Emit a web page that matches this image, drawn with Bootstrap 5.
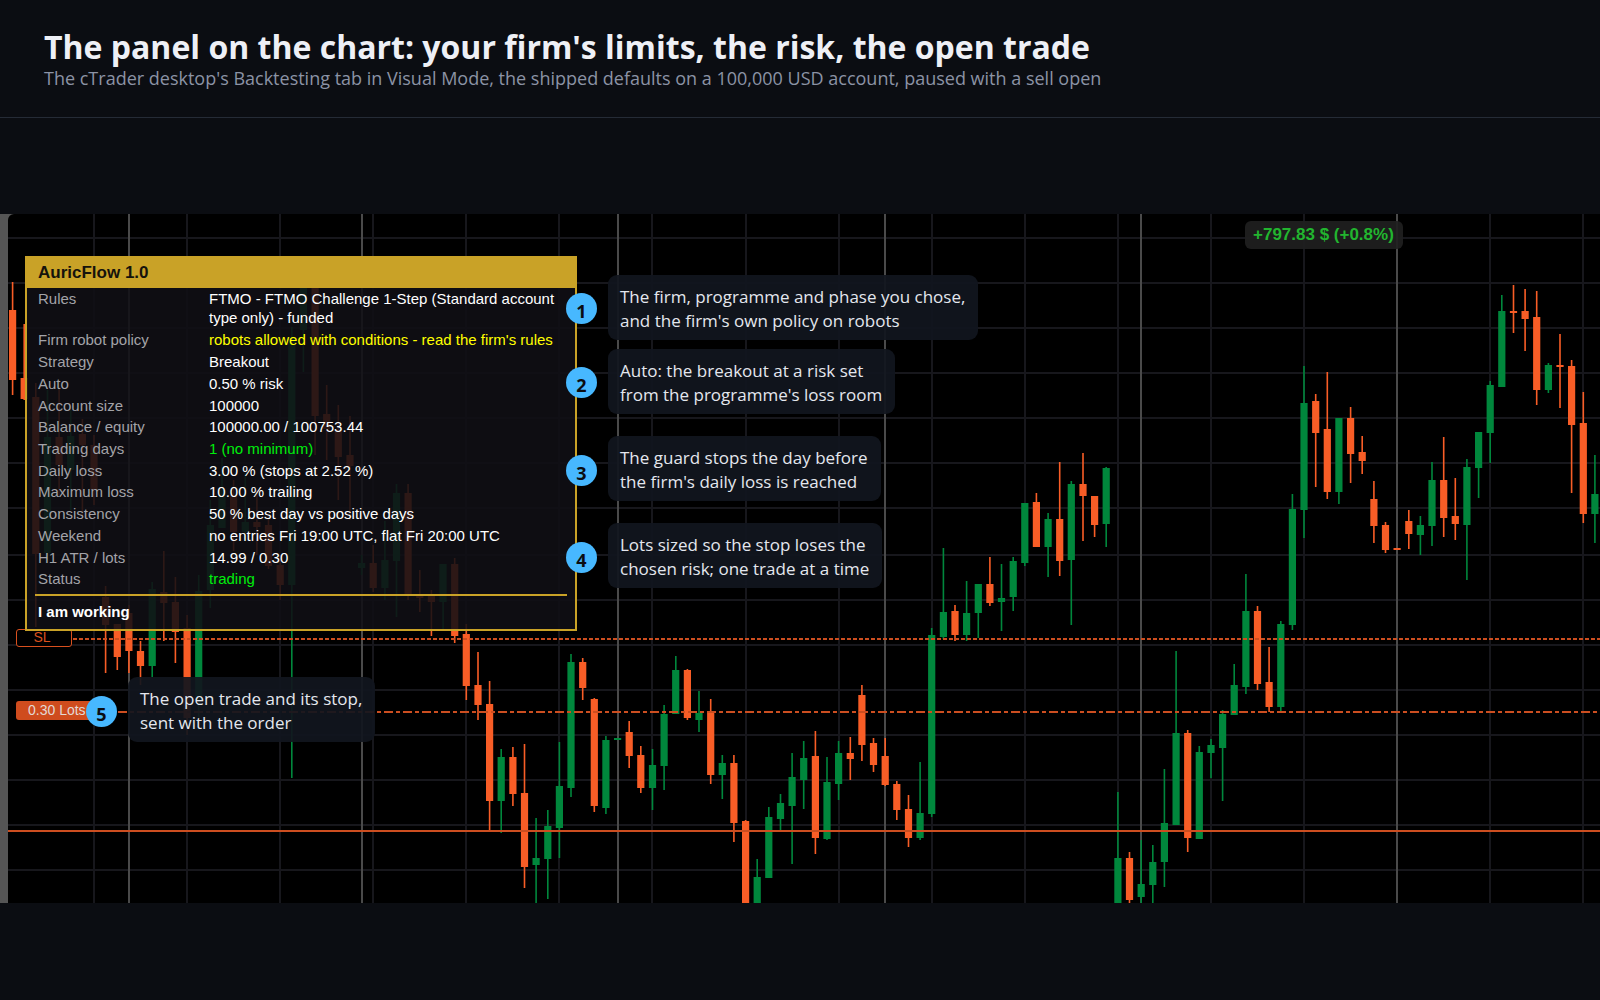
<!DOCTYPE html>
<html lang="en">
<head>
<meta charset="utf-8">
<meta name="viewport" content="width=device-width, initial-scale=1">
<title>AuricFlow - the panel on the chart</title>
<link href="https://cdn.jsdelivr.net/npm/bootstrap@5.3.0/dist/css/bootstrap.min.css" rel="stylesheet">
<style>
  body { background: #0b0d12; color: #eef0f6; font-family: "Open Sans", "Noto Sans", sans-serif; }
  .page-head { padding: 28px 44px 27px; border-bottom: 1px solid #252b36; }
  .page-head h1 { font-size: 32px; line-height: 38px; font-weight: 700; margin: 0; }
  .page-head p { font-size: 18px; line-height: 24px; color: #8b93a5; margin: 0; }
  .stage-area { padding-bottom: 1px; }
  .stage { background: #555; height: 689px; }
  .plot { display: block; width: 100%; height: 100%; }
  .up { fill: #00873c; }
  .down { fill: #f85d26; }
  .robot { position: absolute; left: 25px; top: 42px; width: 552px; height: 375px; border: 2px solid #c9a227;
           background: rgba(16, 15, 20, .88); font-family: "Liberation Sans", Arial, sans-serif; font-size: 15px; color: #fff; }
  .robot h2 { background: #c9a227; color: #15130c; font-size: 17px; line-height: 30px; font-weight: 700; padding: 0 11px; margin: 0; }
  .robot table { width: 100%; height: 302px; }
  .robot th, .robot td { padding: 1px 0; line-height: 19px; font-weight: 400; vertical-align: top; text-align: left; }
  .robot th { width: 182px; padding-left: 11px; color: #a3a3a8; }
  .robot hr { margin: 4px 8px 0; border: 0; border-top: 2px solid #c9a227; opacity: 1; }
  .robot p { margin: 0; padding: 6px 11px; line-height: 20px; font-weight: 700; }
  .warn { color: #ff0; }
  .good { color: #00ee0c; }
  .note { position: absolute; background: rgba(17, 22, 30, .93); border-radius: 9px; padding: 10px 13px 7px 12px;
          font-size: 17px; line-height: 24px; color: #e4e7ee; white-space: nowrap; }
  .pin { position: absolute; width: 31px; height: 31px; border-radius: 50%; background: #47b8ff; color: #0b0d12;
         font-size: 18px; line-height: 31px; padding-top: 3px; font-weight: 700; text-align: center; }
  .tag { position: absolute; left: 16px; border-radius: 3px; font-family: "Liberation Sans", Arial, sans-serif; font-size: 14px; }
  .tag-sl { top: 415px; width: 56px; height: 18px; line-height: 14px; padding-right: 4px; border: 1px solid #d9501e; background: #000; color: #d9501e; text-align: center; }
  .tag-lots { top: 487px; width: 90px; height: 19px; line-height: 19px; padding-left: 12px; background: #cf4c1e; color: #e3d9d5; }
  .profit { position: absolute; left: 1245px; top: 7px; padding: 0 9px 0 8px; border-radius: 6px; background: rgba(32, 32, 32, .92);
            color: #22b52f; font-family: "Liberation Sans", Arial, sans-serif; font-weight: 700; font-size: 17px; line-height: 28px; white-space: nowrap; }
</style>
</head>
<body class="min-vh-100 d-flex flex-column">
<header class="page-head">
  <h1>The panel on the chart: your firm's limits, the risk, the open trade</h1>
  <p>The cTrader desktop's Backtesting tab in Visual Mode, the shipped defaults on a 100,000 USD account, paused with a sell open</p>
</header>
<main class="stage-area flex-grow-1 d-flex flex-column justify-content-center">
  <section class="stage position-relative overflow-hidden" aria-label="Price chart">
    <svg class="plot" aria-hidden="true">
      <svg x="8" width="100%" height="100%"><rect width="100%" height="100%" rx="6"/><rect x="6" width="100%" height="100%"/><rect y="6" width="100%" height="100%"/></svg>
      <g id="plot" transform="translate(0 -214)"></g>
    </svg>

    <div class="tag tag-sl">SL</div>
    <div class="tag tag-lots">0.30 Lots</div>
    <div class="profit">+797.83 $ (+0.8%)</div>

    <div class="robot">
      <h2>AuricFlow 1.0</h2>
      <table>
        <tbody>
          <tr><th scope="row">Rules</th><td>FTMO - FTMO Challenge 1-Step (Standard account<br>type only) - funded</td></tr>
          <tr><th scope="row">Firm robot policy</th><td class="warn">robots allowed with conditions - read the firm's rules</td></tr>
          <tr><th scope="row">Strategy</th><td>Breakout</td></tr>
          <tr><th scope="row">Auto</th><td>0.50 % risk</td></tr>
          <tr><th scope="row">Account size</th><td>100000</td></tr>
          <tr><th scope="row">Balance / equity</th><td>100000.00 / 100753.44</td></tr>
          <tr><th scope="row">Trading days</th><td class="good">1 (no minimum)</td></tr>
          <tr><th scope="row">Daily loss</th><td>3.00 % (stops at 2.52 %)</td></tr>
          <tr><th scope="row">Maximum loss</th><td>10.00 % trailing</td></tr>
          <tr><th scope="row">Consistency</th><td>50 % best day vs positive days</td></tr>
          <tr><th scope="row">Weekend</th><td>no entries Fri 19:00 UTC, flat Fri 20:00 UTC</td></tr>
          <tr><th scope="row">H1 ATR / lots</th><td>14.99 / 0.30</td></tr>
          <tr><th scope="row">Status</th><td class="good">trading</td></tr>
        </tbody>
      </table>
      <hr>
      <p>I am working</p>
    </div>

    <div class="note" style="left:608px;top:61px">The firm, programme and phase you chose,<br>and the firm's own policy on robots</div>
    <div class="note" style="left:608px;top:135px">Auto: the breakout at a risk set<br>from the programme's loss room</div>
    <div class="note" style="left:608px;top:222px">The guard stops the day before<br>the firm's daily loss is reached</div>
    <div class="note" style="left:608px;top:309px">Lots sized so the stop loses the<br>chosen risk; one trade at a time</div>
    <div class="note" style="left:128px;top:463px">The open trade and its stop,<br>sent with the order</div>

    <div class="pin" style="left:566px;top:79px">1</div>
    <div class="pin" style="left:566px;top:153px">2</div>
    <div class="pin" style="left:566px;top:241px">3</div>
    <div class="pin" style="left:566px;top:328px">4</div>
    <div class="pin" style="left:86px;top:482px">5</div>
  </section>
</main>
<script src="https://cdn.jsdelivr.net/npm/bootstrap@5.3.0/dist/js/bootstrap.bundle.min.js"></script>
<script>
  // One entry per bar: direction, body top, body bottom, wick top, wick bottom.
  const bars = `d310,380,282,395 d378,399,324,400 d397,554,383,627 u437,553,390,560 d437,465,388,495 u436,470,410,510
d434,445,419,515 d445,490,435,505 d597,625,586,673 d624,657,624,670 d613,651,605,673 d651,666,641,685 u589,666,582,677
d592,603,551,641 d602,632,577,663 d628,718,615,735 u591,700,575,718 u525,590,500,608 u490,528,458,528 d495,532,480,551
u522,532,473,540 d522,527,490,555 d525,566,515,569 d565,585,555,600 u338,585,327,778 u270,330,270,372 d280,416,270,455
d414,429,385,460 d430,457,405,500 d455,466,416,520 u563,568,555,575 d563,588,545,592 u560,588,521,600 u493,561,484,617
d493,596,484,600 d596,598,570,612 d596,602,590,636 u564,602,564,630 d564,636,558,643 d634,686,624,700 d685,705,652,720
d704,801,681,831 u757,801,749,833 d757,794,747,806 d793,867,744,888 u858,865,818,903 u826,859,810,899 u786,828,742,858
u662,788,654,797 d662,688,658,700 d699,806,698,812 u740,808,736,814 u738,740,738,740 d732,756,721,768 d755,788,746,793
u765,788,749,810 u714,766,705,790 u670,714,656,714 d670,718,669,720 u713,720,691,732 d712,775,699,784 u763,775,755,799
d763,823,755,842 d821,903,820,903 u877,903,859,903 u817,878,807,878 u803,819,794,831 u777,806,753,864 u758,780,741,809
d756,838,731,854 u782,839,757,840 u753,784,741,800 d753,759,737,780 d695,745,685,761 d743,765,738,772 d756,785,738,786
d784,810,781,820 d809,838,795,847 u813,838,762,840 u635,814,628,817 u612,637,548,639 d611,635,605,641 u613,635,581,641
u584,613,584,638 d584,603,557,606 u598,602,564,631 u561,597,557,611 u503,563,503,566 d502,547,493,547 u519,547,513,577
d519,561,462,576 u484,560,481,625 d484,496,453,541 d496,525,496,537 u468,524,467,547 u858,903,792,903 d858,900,852,903
u884,897,840,903 u862,885,845,903 u823,862,769,887 u733,825,651,825 d733,838,730,852 u752,839,746,839 u745,753,739,778
u714,748,710,801 u685,715,664,715 u611,687,574,694 d611,684,606,690 d682,707,647,712 u624,707,621,712 u509,625,494,630
u403,510,366,538 d401,433,394,487 d429,492,372,499 u418,492,418,504 d418,454,407,483 d452,461,436,474 d499,526,481,543
d525,550,522,553 d548,550,548,550 d521,534,510,549 u525,535,516,555 u480,526,462,546 d480,518,437,537 d516,524,478,540
u467,525,459,580 u432,468,432,498 u385,433,381,463 u311,387,295,387 d311,313,285,333 d311,319,289,351 d317,390,291,405
u365,390,363,393 d365,367,334,408 d366,425,360,493 d423,514,392,523 u494,514,455,543`.split(/\s+/);
  const step = 11.635, first = 94 - 7 * step;
  const box = (x, y, w, h, attr) => `<rect x="${x}" y="${y}" width="${w}" height="${h}" ${attr}/>`;
  let out = '';
  for (let k = 0; k < 17; k++) out += box(Math.round(93 + k * step * 8), 214, 2, 689, 'fill="#17171c"');
  for (const y of [238, 283, 328, 373, 418, 463, 508, 555, 600, 645, 690, 735, 780, 825, 870]) out += box(8, y - 1, '100%', 2, 'fill="#17171c"');
  // Day separators
  for (const x of [128, 361, 617, 884, 1140, 1396]) out += box(x, 214, 2, 689, 'fill="#4a4a4a"');
  bars.forEach((bar, i) => {
    const x = first + i * step, [top, bottom, high, low] = bar.slice(1).split(',').map(Number);
    const cls = `class="${bar[0] === 'u' ? 'up' : 'down'}"`;
    out += box((x - .8).toFixed(1), high, 1.6, low - high, cls) + box((x - 3.6).toFixed(1), top, 7.2, bottom - top, cls);
  });
  const rule = (y, x, w, dash) => `<line x1="${x}" y1="${y}" x2="100%" y2="${y}" stroke="#cc4e20" stroke-width="${w}" stroke-dasharray="${dash}"/>`;
  out += rule(639, 73, 2, '4 2') + rule(712, 118, 2, '9 3 4 3') + rule(831, 8, 2, 'none');
  document.getElementById('plot').innerHTML = out;
</script>
</body>
</html>
